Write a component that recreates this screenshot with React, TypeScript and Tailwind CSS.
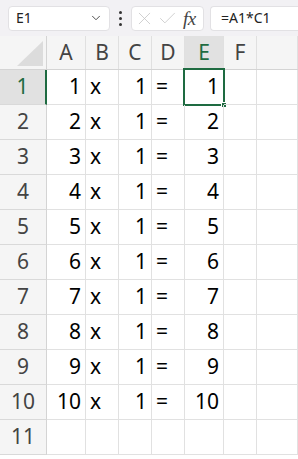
import { ChevronDown, X, Check } from "lucide-react";

const cols = ["A", "B", "C", "D", "E", "F", ""];
const widths = ["w-[39px]", "w-[33px]", "w-[33px]", "w-[33px]", "w-[39px]", "w-[33px]", "flex-1"];
const rows = [1, 2, 3, 4, 5, 6, 7, 8, 9, 10, 11];

const App = () => {
  return (
    <div className="w-[298px] h-[459px] overflow-hidden bg-white text-[#222] font-['Noto_Sans',sans-serif]">
      {/* formula bar */}
      <div className="flex items-center h-[36px] bg-[#f2f1f4] pl-[8px]">
        <div className="flex items-center justify-between w-[102px] h-[25px] bg-white border border-[#e2e1e4] rounded-[4px] pl-[7px] pr-[6px]">
          <span className="text-[14px] text-[#222] leading-none">E1</span>
          <ChevronDown size={14} strokeWidth={1.6} className="text-[#444]" />
        </div>
        <div className="flex flex-col justify-center gap-[3px] w-[21px] items-center">
          <span className="w-[3px] h-[3px] rounded-full bg-[#333]" />
          <span className="w-[3px] h-[3px] rounded-full bg-[#333]" />
          <span className="w-[3px] h-[3px] rounded-full bg-[#333]" />
        </div>
        <div className="flex items-center w-[73px] h-[25px] bg-white border border-[#e2e1e4] rounded-[4px] pl-[2px] gap-[2px]">
          <X size={21} strokeWidth={0.9} className="text-[#c4c4c4]" />
          <Check size={21} strokeWidth={0.9} className="text-[#c4c4c4]" />
          <span className="ml-[3px] text-[19px] italic text-[#444] font-['Liberation_Serif',serif] leading-none tracking-[-0.5px]">
            fx
          </span>
        </div>
        <div className="flex items-center flex-1 h-[25px] ml-[6px] bg-white border border-r-0 border-[#e2e1e4] rounded-l-[4px] pl-[10px]">
          <span className="text-[14px] text-[#222] leading-none">=A1*C1</span>
        </div>
      </div>

      {/* column headers */}
      <div className="flex h-[34px] bg-[#f5f5f5] border-b border-[#d4d4d4]">
        <div className="relative w-[47px] border-r border-[#d4d4d4]">
          <svg className="absolute right-[3px] bottom-[3px]" width="26" height="25" viewBox="0 0 26 25">
            <polygon points="26,0 26,25 0,25" fill="#dcdcdc" />
          </svg>
        </div>
        {cols.map((c, i) => (
          <div
            key={i}
            className={`${widths[i]} flex items-center justify-center border-r border-[#e0e0e0] text-[21px] ${
              c === "E" ? "bg-[#e1e1e1] text-[#1e6b41]" : "text-[#444]"
            }`}
          >
            {c}
          </div>
        ))}
      </div>

      {/* rows */}
      {rows.map((r) => (
        <div key={r} className="flex h-[35px]">
          <div
            className={`w-[47px] flex items-center justify-center text-[21px] border-b border-[#d9d9d9] ${
              r === 1
                ? "bg-[#e1e1e1] text-[#1e6b41] border-r-2 border-r-[#1e6b41]"
                : "bg-[#f5f5f5] text-[#444] border-r border-r-[#d4d4d4]"
            }`}
          >
            {r}
          </div>
          {cols.map((c, i) => {
            let content = "";
            let align = "justify-end pr-[4px]";
            if (r <= 10) {
              if (c === "A") content = String(r);
              if (c === "B") { content = "x"; align = "justify-start pl-[4px]"; }
              if (c === "C") content = "1";
              if (c === "D") { content = "="; align = "justify-start pl-[4px]"; }
              if (c === "E") content = String(r);
            }
            return (
              <div
                key={i}
                className={`${widths[i]} relative flex items-center ${align} border-r border-b border-[#e1e1e1] text-[21px] text-black`}
              >
                {content}
                {r === 1 && c === "E" && (
                  <div className="absolute -left-[2px] -top-[2px] w-[42px] h-[38px] border-2 border-[#1e6b41]">
                    <div className="absolute -right-[4px] -bottom-[4px] w-[6px] h-[6px] bg-[#1e6b41] border border-white" />
                  </div>
                )}
              </div>
            );
          })}
        </div>
      ))}
    </div>
  );
};

export default App;
